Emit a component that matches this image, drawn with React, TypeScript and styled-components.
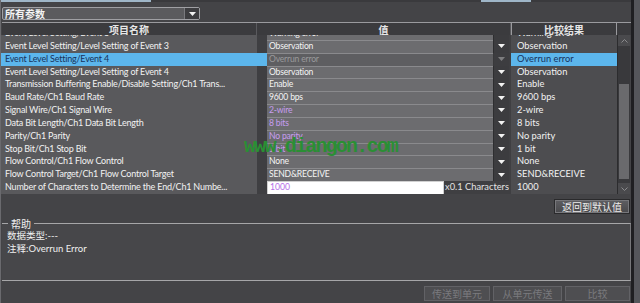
import React from "react";
import styled, { createGlobalStyle } from "styled-components";

const FONT = `Lato, "Noto Sans CJK SC", sans-serif`;
const CJK = `"Noto Sans CJK SC", sans-serif`;

const Global = createGlobalStyle`
  html, body {
    margin: 0;
    padding: 0;
    background: #434346;
  }
  body {
    font-family: ${FONT};
  }
`;

const Frame = styled.div`
  position: relative;
  width: 640px;
  height: 303px;
  display: flex;
  flex-direction: row;
  overflow: hidden;
  background: #434346;
`;

const Main = styled.div`
  width: 630px;
  display: flex;
  flex-direction: column;
  border-left: 1px solid #6a6a6e;
  border-right: 3px solid #1f1f22;
  background: #444447;
`;

const SideStrip = styled.div`
  flex: 1;
  background: #55565b;
`;

const TopLine = styled.div`
  height: 2px;
  display: flex;
  background: #3a3a3d;
`;

const TopSeg = styled.div<{ $w: number; $light?: boolean }>`
  width: ${(p) => p.$w}px;
  background: ${(p) => (p.$light ? "#9fb6c8" : "transparent")};
`;

const Toolbar = styled.div`
  height: 20px;
  display: flex;
  align-items: flex-start;
  padding: 5px 0 0 1px;
  box-sizing: border-box;
`;

const Select = styled.div`
  width: 198px;
  height: 13px;
  box-sizing: border-box;
  display: flex;
  align-items: center;
  background: #5b5b5e;
  border: 1px solid #a0a0a4;
  border-radius: 2px;
  color: #f4f4f4;
  font-family: ${CJK};
  font-size: 10px;
  font-weight: 600;
`;

const SelectText = styled.span`
  flex: 1;
  padding-left: 2px;
  line-height: 11px;
`;

const ArrowBox = styled.span<{ $dim?: boolean }>`
  width: 14px;
  height: 100%;
  display: flex;
  align-items: center;
  justify-content: center;
  background: #3d3d40;
  border-left: 1px solid #7a7a7e;
  opacity: ${(p) => (p.$dim ? 0.35 : 1)};
`;

const Tri = () => (
  <svg width="7" height="4" viewBox="0 0 7 4">
    <path d="M0 0 H7 L3.5 4 Z" fill="#f2f2f2" />
  </svg>
);

const Header = styled.div`
  height: 12px;
  display: grid;
  grid-template-columns: 255px 254px 106px;
  margin-left: 1px;
  border-top: 1px solid #9a9a9e;
  background: #3b3b3e;
`;

const HeadCell = styled.div<{ $boxed?: boolean }>`
  display: flex;
  align-items: center;
  justify-content: center;
  color: #e6e6e6;
  font-family: ${CJK};
  font-size: 10px;
  font-weight: 600;
  line-height: 11px;
  border-right: 1px solid ${(p) => (p.$boxed ? "#9a9a9e" : "#5a5a5e")};
  border-left: ${(p) => (p.$boxed ? "1px solid #9a9a9e" : "none")};
`;

const Body = styled.div`
  height: 159px;
  display: flex;
  overflow: hidden;
`;

const Rows = styled.div`
  width: 616px;
  margin-top: -8px;
  display: flex;
  flex-direction: column;
`;

const Row = styled.div`
  height: 12.85px;
  flex: none;
  display: grid;
  grid-template-columns: 256px 10px 242px 2px 106px;
  box-sizing: border-box;
  border-bottom: 1px solid #3a3a3c;
  font-size: 9px;
  line-height: 11.85px;
`;

const NameCell = styled.div<{ $sel?: boolean }>`
  padding-left: 4px;
  background: ${(p) => (p.$sel ? "#5cb6ec" : "#59595c")};
  color: ${(p) => (p.$sel ? "#17335c" : "#f2f2f2")};
  letter-spacing: -0.2px;
  white-space: nowrap;
  overflow: hidden;
`;

const Gap = styled.div<{ $sel?: boolean }>`
  background: ${(p) => (p.$sel ? "#5cb6ec" : "#3f3f42")};
`;

const ValueCell = styled.div`
  display: flex;
  background: #3f3f42;
`;

const ValueBox = styled.div<{ $tone: "normal" | "purple" | "dim" }>`
  flex: 1;
  padding-left: 2px;
  background: ${(p) => (p.$tone === "dim" ? "#5e5e61" : "#6c6c6f")};
  border-top: 1px solid #8a8a8d;
  color: ${(p) =>
    p.$tone === "purple" ? "#c79df0" : p.$tone === "dim" ? "#9a9a9c" : "#f4f4f4"};
  font-size: 8.6px;
  letter-spacing: -0.2px;
  white-space: nowrap;
  overflow: hidden;
`;

const ValueArrow = styled(ArrowBox)`
  width: 15px;
  border-left: 1px solid #2e2e30;
  background: #3c3c3f;
`;

const TextInput = styled.div`
  width: 177px;
  background: #ffffff;
  color: #b46ee8;
  padding-left: 2px;
  border: 1px solid #d0d0d0;
  box-sizing: border-box;
  font-size: 8.6px;
`;

const Unit = styled.div`
  flex: 1;
  color: #e4e4e4;
  padding-left: 1px;
  font-size: 9.3px;
  white-space: nowrap;
`;

const Spacer = styled.div`
  background: #3f3f42;
`;

const CompareCell = styled.div<{ $sel?: boolean }>`
  padding-left: 6px;
  background: ${(p) => (p.$sel ? "#5cb6ec" : "#4d4d50")};
  color: ${(p) => (p.$sel ? "#17335c" : "#f2f2f2")};
  font-size: 9.3px;
  white-space: nowrap;
  overflow: hidden;
`;

const Scrollbar = styled.div`
  width: 12px;
  display: flex;
  flex-direction: column;
  background: #39393c;
  border-left: 1px solid #2c2c2e;
`;

const ScrollBtn = styled.div`
  height: 11px;
  display: flex;
  align-items: center;
  justify-content: center;
  background: #4a4a4d;
`;

const ScrollTrack = styled.div`
  flex: 1;
  display: flex;
  flex-direction: column;
  padding: 38px 1px 4px;
`;

const Thumb = styled.div`
  flex: 1;
  background: #6a6a6d;
`;

const Chevron = ({ up }: { up?: boolean }) => (
  <svg width="7" height="4" viewBox="0 0 7 4">
    <path
      d={up ? "M0.5 3.5 L3.5 0.5 L6.5 3.5" : "M0.5 0.5 L3.5 3.5 L6.5 0.5"}
      stroke="#8a8a8d"
      fill="none"
      strokeWidth="1"
    />
  </svg>
);

const ActionBar = styled.div`
  height: 23px;
  display: flex;
  justify-content: flex-end;
  align-items: flex-start;
  padding: 5px 1px 0 0;
  box-sizing: border-box;
`;

const Button = styled.div<{ $w: number; $disabled?: boolean }>`
  width: ${(p) => p.$w}px;
  height: 15px;
  box-sizing: border-box;
  display: flex;
  align-items: center;
  justify-content: center;
  font-family: ${CJK};
  font-size: 10px;
  color: ${(p) => (p.$disabled ? "#7a7a7e" : "#ececec")};
  background: ${(p) =>
    p.$disabled ? "#4e4e51" : "linear-gradient(#5e5e62, #48484b)"};
  border: 1px solid ${(p) => (p.$disabled ? "#626266" : "#2a2a2c")};
  box-shadow: ${(p) => (p.$disabled ? "none" : "inset 0 0 0 1px #77777b")};
`;

const Help = styled.fieldset`
  margin: 0 0 0 1px;
  height: 64px;
  padding: 0 5px;
  box-sizing: border-box;
  border: none;
  border-top: 1px solid #a6a6a8;
  border-bottom: 1px solid #a6a6a8;
  border-right: 1px solid #77777a;
  background: #47474a;
  color: #f0f0f0;
  font-size: 9.5px;
  line-height: 12.5px;
`;

const Legend = styled.legend`
  padding: 0 3px;
  margin-left: 1px;
  font-family: ${CJK};
  font-size: 10px;
  line-height: 13px;
  color: #f0f0f0;
`;

const BottomBar = styled.div`
  flex: 1;
  display: flex;
  justify-content: flex-end;
  align-items: flex-start;
  gap: 3px;
  padding: 5px 1px 0 0;
`;

const Watermark = styled.div`
  position: absolute;
  left: 244px;
  top: 135px;
  font-family: "Liberation Mono", monospace;
  font-size: 20px;
  font-weight: bold;
  color: #2a8f34;
  letter-spacing: -1.8px;
  pointer-events: none;
`;

type Tone = "normal" | "purple" | "dim";
type Item = {
  name: string;
  value: string;
  tone?: Tone;
  compare: string;
  sel?: boolean;
  input?: boolean;
};

const items: Item[] = [
  { name: "Event Level Setting/Event 3", value: "Warning error", compare: "Warning error" },
  { name: "Event Level Setting/Level Setting of Event 3", value: "Observation", compare: "Observation" },
  { name: "Event Level Setting/Event 4", value: "Overrun error", tone: "dim", compare: "Overrun error", sel: true },
  { name: "Event Level Setting/Level Setting of Event 4", value: "Observation", compare: "Observation" },
  { name: "Transmission Buffering Enable/Disable Setting/Ch1 Trans...", value: "Enable", compare: "Enable" },
  { name: "Baud Rate/Ch1 Baud Rate", value: "9600 bps", compare: "9600 bps" },
  { name: "Signal Wire/Ch1 Signal Wire", value: "2-wire", tone: "purple", compare: "2-wire" },
  { name: "Data Bit Length/Ch1 Data Bit Length", value: "8 bits", tone: "purple", compare: "8 bits" },
  { name: "Parity/Ch1 Parity", value: "No parity", tone: "purple", compare: "No parity" },
  { name: "Stop Bit/Ch1 Stop Bit", value: "1 bit", tone: "purple", compare: "1 bit" },
  { name: "Flow Control/Ch1 Flow Control", value: "None", compare: "None" },
  { name: "Flow Control Target/Ch1 Flow Control Target", value: "SEND&RECEIVE", compare: "SEND&RECEIVE" },
  { name: "Number of Characters to Determine the End/Ch1 Numbe...", value: "1000", compare: "1000", input: true },
];

export default function App() {
  return (
    <>
      <Global />
      <Frame>
        <Main>
          <TopLine>
            <TopSeg $w={150} $light />
            <TopSeg $w={330} />
            <TopSeg $w={50} $light />
          </TopLine>
          <Toolbar>
            <Select>
              <SelectText>所有参数</SelectText>
              <ArrowBox>
                <Tri />
              </ArrowBox>
            </Select>
          </Toolbar>
          <Header>
            <HeadCell>项目名称</HeadCell>
            <HeadCell>值</HeadCell>
            <HeadCell $boxed>比较结果</HeadCell>
          </Header>
          <Body>
            <Rows>
              {items.map((it, i) => (
                <Row key={i}>
                  <NameCell $sel={it.sel}>{it.name}</NameCell>
                  <Gap $sel={it.sel} />
                  <ValueCell>
                    {it.input ? (
                      <>
                        <TextInput>{it.value}</TextInput>
                        <Unit>x0.1 Characters</Unit>
                      </>
                    ) : (
                      <>
                        <ValueBox $tone={it.tone ?? "normal"}>{it.value}</ValueBox>
                        <ValueArrow $dim={it.tone === "dim"}>
                          <Tri />
                        </ValueArrow>
                      </>
                    )}
                  </ValueCell>
                  <Spacer />
                  <CompareCell $sel={it.sel}>{it.compare}</CompareCell>
                </Row>
              ))}
            </Rows>
            <Scrollbar>
              <ScrollBtn>
                <Chevron up />
              </ScrollBtn>
              <ScrollTrack>
                <Thumb />
              </ScrollTrack>
              <ScrollBtn>
                <Chevron />
              </ScrollBtn>
            </Scrollbar>
          </Body>
          <ActionBar>
            <Button $w={76}>返回到默认值</Button>
          </ActionBar>
          <Help>
            <Legend>帮助</Legend>
            <div>数据类型:---</div>
            <div>注释:Overrun Error</div>
          </Help>
          <BottomBar>
            <Button $w={66} $disabled>传送到单元</Button>
            <Button $w={69} $disabled>从单元传送</Button>
            <Button $w={65} $disabled>比较</Button>
          </BottomBar>
        </Main>
        <SideStrip />
        <Watermark>www.diangon.com</Watermark>
      </Frame>
    </>
  );
}
